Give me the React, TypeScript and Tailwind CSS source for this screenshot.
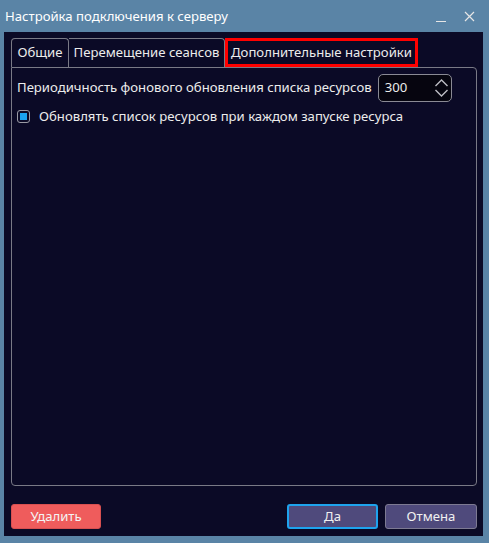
import React from "react";

export default function App() {
  const font = { fontFamily: '"Noto Sans", "Open Sans", sans-serif' };
  return (
    <div
      className="w-[489px] h-[543px] bg-[#5a84a6] flex flex-col text-[13.15px] text-[#ececec]"
      style={font}
    >
      <div className="h-[32px] flex items-center pl-[5px] pr-[14px] text-white shrink-0">
        <span className="flex-1 text-[13.15px] mt-[1px]">Настройка подключения к серверу</span>
        <svg width="12" height="12" viewBox="0 0 12 12" className="mr-[17px] mt-[2px]">
          <line x1="1" y1="10.5" x2="11" y2="10.5" stroke="#e6e6e6" strokeWidth="1" />
        </svg>
        <svg width="11" height="11" viewBox="0 0 11 11">
          <path d="M1 1 L10 10 M10 1 L1 10" stroke="#e6e6e6" strokeWidth="1.2" />
        </svg>
      </div>
      <div className="flex-1 ml-[4px] mr-[6px] mb-[7px] bg-[#0b0a26] flex flex-col pl-[7px] pr-[6px] pt-[6px] pb-[7px]">
        <div className="flex items-end h-[29px] shrink-0">
          <div className="w-[58px] h-[29px] border border-b-0 border-[#7a7a86] rounded-t-[4px] flex items-center justify-center">
            Общие
          </div>
          <div className="w-[156px] h-[29px] border border-b-0 border-l-0 border-[#7a7a86] rounded-tr-[4px] flex items-center justify-center">
            Перемещение сеансов
          </div>
          <div className="w-[193px] h-[29px] border-[3px] border-[#ff0000] flex items-center justify-center bg-[#0b0a26]">
            Дополнительные настройки
          </div>
        </div>
        <div className="flex-1 border border-[#7a7a86] rounded-b-[4px] rounded-tr-[4px] px-[5px] pt-[6px] flex flex-col gap-[5px]">
          <div className="flex items-center">
            <span className="mr-[6px]">Периодичность фонового обновления списка ресурсов</span>
            <div className="w-[74px] h-[28px] bg-[#06050f] border border-[#8a8a94] rounded-[5px] flex items-center pl-[6px] pr-[2px]">
              <span className="flex-1">300</span>
              <svg width="15" height="24" viewBox="0 0 15 24">
                <path d="M1.5 10 L7.5 4 L13.5 10" fill="none" stroke="#bdbdc4" strokeWidth="1.4" />
                <path d="M1.5 14 L7.5 20 L13.5 14" fill="none" stroke="#bdbdc4" strokeWidth="1.4" />
              </svg>
            </div>
          </div>
          <div className="flex items-center">
            <div className="w-[13px] h-[13px] border border-[#9a9aa4] rounded-[3px] flex items-center justify-center mr-[9px]">
              <div className="w-[7px] h-[7px] bg-[#1aa3f0]" />
            </div>
            <span>Обновлять список ресурсов при каждом запуске ресурса</span>
          </div>
        </div>
        <div className="flex items-center mt-[18px] h-[25px] shrink-0">
          <button className="w-[90px] h-[25px] rounded-[3px] bg-[#ef5c5c] border border-[#d85050] text-[#f4f4f4]">
            Удалить
          </button>
          <div className="flex-1" />
          <button className="w-[91px] h-[25px] rounded-[3px] bg-[#4f4a7c] border-2 border-[#1ea3ee] text-[#f0f0f0]">
            Да
          </button>
          <button className="ml-[7px] w-[92px] h-[25px] rounded-[3px] bg-[#4f4a7c] border border-[#7d7a92] text-[#f0f0f0]">
            Отмена
          </button>
        </div>
      </div>
    </div>
  );
}
